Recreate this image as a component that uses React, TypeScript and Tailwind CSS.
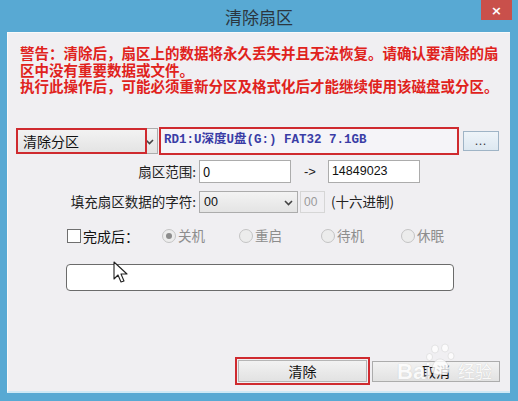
import React from "react";

const CJK = '"Noto Sans CJK SC", "Noto Sans", sans-serif';

function Radio({ checked, label, className }: { checked?: boolean; label: string; className?: string }) {
  return (
    <div className={"flex items-center " + (className ?? "")}>
      <div className="w-[14px] h-[14px] rounded-full border border-[#c4c4c4] bg-[#ececec] flex items-center justify-center">
        {checked && <div className="w-[6px] h-[6px] rounded-full bg-[#8c8c8c]" />}
      </div>
      <span className="ml-[2px] text-[13.5px] text-[#8d8d8d] leading-none">{label}</span>
    </div>
  );
}

function Chevron() {
  return (
    <svg width="9" height="6" viewBox="0 0 9 6">
      <path d="M1 1 L4.5 4.5 L8 1" stroke="#444" strokeWidth="1.6" fill="none" />
    </svg>
  );
}

export default function App() {
  return (
    <div
      className="relative w-[518px] h-[401px] bg-[#58a9d3] overflow-hidden"
      style={{ fontFamily: CJK }}
    >
      {/* title bar */}
      <div className="h-[32px] flex items-center justify-center">
        <span className="text-[17px] text-[#2b3640] leading-none">清除扇区</span>
      </div>
      <div className="absolute right-[6px] top-0 w-[31px] h-[20px] bg-[#c9504b] flex items-center justify-center">
        <span className="text-white text-[13px] leading-none font-bold" style={{ fontFamily: '"DejaVu Sans", sans-serif' }}>
          ×
        </span>
      </div>

      {/* client */}
      <div className="ml-[7px] w-[503px] h-[361px] bg-[#f0eff2] border-t border-l border-[#fafafa] border-b-2 border-b-[#cfe9f5] flex flex-col">
        {/* warning */}
        <div className="mt-[11px] pl-[12px] text-[14.5px] leading-[17px] font-bold text-[#e0221c] whitespace-nowrap">
          <div className="h-[17px]">警告：清除后，扇区上的数据将永久丢失并且无法恢复。请确认要清除的扇</div>
          <div className="h-[16px]">区中没有重要数据或文件。</div>
          <div className="h-[17px]">执行此操作后，可能必须重新分区及格式化后才能继续使用该磁盘或分区。</div>
        </div>

        {/* row 1 */}
        <div className="mt-[32px] h-[29px] flex items-center pl-[8px]">
          <div className="relative w-[142px] h-[26px] bg-gradient-to-b from-[#f3f3f3] to-[#e3e3e3] border border-[#adadad] flex items-center">
            <span className="ml-[6px] text-[14px] text-[#111] leading-none">清除分区</span>
            <div className="absolute right-[3px] top-[10px]">
              <Chevron />
            </div>
            <div className="absolute left-[-1px] top-[-1px] w-[131px] h-[26px] border-2 border-[#cf2a2f]" />
          </div>
          <div className="ml-[1px] w-[300px] h-[28px] border-2 border-[#cf2a2f] bg-[#f5f4f8] flex items-center">
            <span
              className="ml-[3px] text-[12.5px] font-bold text-[#3a3da6] leading-none whitespace-pre"
              style={{ fontFamily: '"Liberation Mono", "Noto Sans CJK SC", monospace' }}
            >
              RD1:U深度U盘(G:) FAT32 7.1GB
            </span>
          </div>
          <div className="ml-[4px] w-[36px] h-[20px] border border-[#9fb4c6] bg-gradient-to-b from-[#eef4f9] to-[#dde8f1] flex items-center justify-center">
            <span className="text-[11px] text-[#333] leading-none tracking-[1px]">...</span>
          </div>
        </div>

        {/* row 2 */}
        <div className="mt-[5px] h-[23px] flex items-center">
          <div className="w-[188px] text-right text-[13.5px] text-[#222] leading-none">扇区范围:</div>
          <div className="ml-[3px] w-[92px] h-[23px] bg-white border border-[#acacac] flex items-center">
            <span className="ml-[3px] text-[13px] text-[#111] leading-none">0</span>
          </div>
          <span className="ml-[13px] text-[13px] text-[#222] leading-none" style={{ fontFamily: '"Liberation Sans", sans-serif' }}>
            -&gt;
          </span>
          <div className="ml-[12px] w-[92px] h-[23px] bg-white border border-[#acacac] flex items-center">
            <span className="ml-[3px] text-[12.5px] text-[#111] leading-none" style={{ fontFamily: '"Liberation Sans", sans-serif' }}>
              14849023
            </span>
          </div>
        </div>

        {/* row 3 */}
        <div className="mt-[8px] h-[22px] flex items-center">
          <div className="w-[188px] text-right text-[13.5px] text-[#222] leading-none">填充扇区数据的字符:</div>
          <div className="relative ml-[3px] w-[99px] h-[22px] bg-gradient-to-b from-[#f3f3f3] to-[#e4e4e4] border border-[#acacac] flex items-center">
            <span className="ml-[4px] text-[12.5px] text-[#111] leading-none" style={{ fontFamily: '"Liberation Sans", sans-serif' }}>
              00
            </span>
            <div className="absolute right-[4px] top-[8px]">
              <Chevron />
            </div>
          </div>
          <div className="ml-[2px] w-[25px] h-[22px] border border-[#d6d6d6] bg-[#f0eff2] flex items-center">
            <span className="ml-[3px] text-[12px] text-[#9a9a9a] leading-none" style={{ fontFamily: '"Liberation Sans", sans-serif' }}>
              00
            </span>
          </div>
          <span className="ml-[6px] text-[13.5px] text-[#222] leading-none">(十六进制)</span>
        </div>

        {/* row 4 */}
        <div className="mt-[14px] h-[18px] flex items-center">
          <div className="ml-[59px] w-[14px] h-[14px] bg-white border border-[#6f6f6f]" />
          <span className="ml-[2px] text-[14px] text-[#111] leading-none">完成后：</span>
          <Radio checked label="关机" className="ml-[23px]" />
          <Radio label="重启" className="ml-[34px]" />
          <Radio label="待机" className="ml-[39px]" />
          <Radio label="休眠" className="ml-[37px]" />
        </div>

        {/* progress */}
        <div className="mt-[19px] ml-[58px] w-[388px] h-[27px] bg-white border border-[#6b6b6b] rounded-[4px]" />

        {/* buttons */}
        <div className="mt-[66px] h-[28px] flex items-center">
          <div className="ml-[227px] w-[135px] h-[28px] border-2 border-[#cf2a2f] p-[1px] flex">
            <div className="flex-1 bg-gradient-to-b from-[#f2f2f2] to-[#e2e2e2] border border-[#b5b5b5] flex items-center justify-center">
              <span className="text-[14px] text-[#111] leading-none">清除</span>
            </div>
          </div>
          <div className="ml-[2px] w-[128px] h-[21px] bg-gradient-to-b from-[#f2f2f2] to-[#e2e2e2] border border-[#acacac] flex items-center justify-center">
            <span className="text-[14px] text-[#111] leading-none">取消</span>
          </div>
        </div>
      </div>

      {/* watermark */}
      <div className="absolute left-[397px] top-[361px] flex items-center opacity-80 pointer-events-none">
        <span className="text-[22px] font-bold text-white leading-none" style={{ fontFamily: '"Liberation Sans", sans-serif', textShadow: "0 0 1px #bbb" }}>
          Bai
        </span>
      </div>
      <svg className="absolute left-[426px] top-[343px] pointer-events-none opacity-80" width="30" height="34" viewBox="0 0 30 34">
        <g fill="#ffffff" stroke="#d0d0d0" strokeWidth="0.6">
          <ellipse cx="9" cy="6" rx="3.5" ry="4" />
          <ellipse cx="19" cy="5" rx="3.5" ry="4" />
          <ellipse cx="3.5" cy="14" rx="3" ry="3.5" />
          <ellipse cx="25" cy="13" rx="3" ry="3.5" />
          <path d="M6 28 C6 20 10 16 14 16 C18 16 23 20 23 28 C23 33 6 33 6 28 Z" />
        </g>
      </svg>
      <span className="absolute left-[458px] top-[362px] text-[17px] text-white opacity-80 leading-none pointer-events-none" style={{ textShadow: "0 0 1px #bbb" }}>
        经验
      </span>

      {/* cursor */}
      <svg className="absolute left-[113px] top-[261px]" width="17" height="24" viewBox="0 0 17 24">
        <path d="M1 1 L1 18 L5 14 L8 21 L11 20 L8 13 L14 13 Z" fill="#ffffff" stroke="#222" strokeWidth="1.1" strokeLinejoin="round" />
      </svg>
    </div>
  );
}
